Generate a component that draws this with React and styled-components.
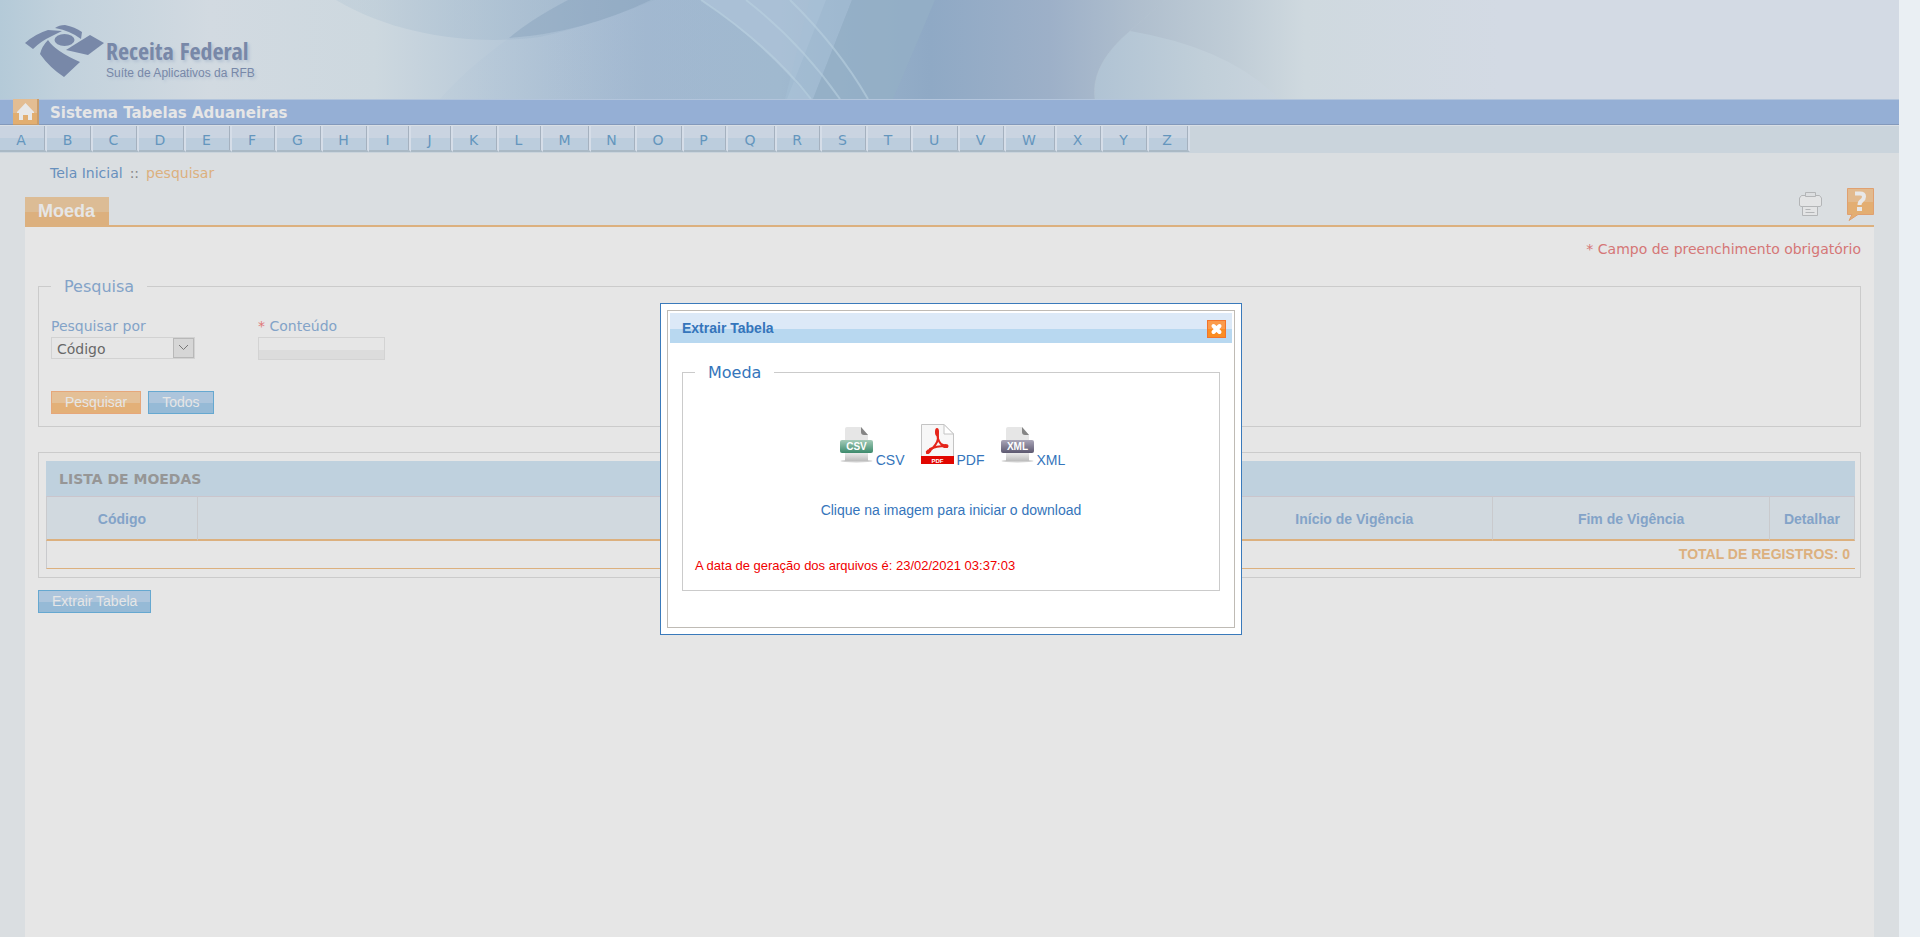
import React from "react";
import styled, { createGlobalStyle } from "styled-components";

const verdana = `Verdana, "DejaVu Sans", sans-serif`;
const arial = `"Liberation Sans", Arial, sans-serif`;

const GlobalStyle = createGlobalStyle`
  * { box-sizing: border-box; }
  html, body, #root { min-height: 100%; }
  body { margin: 0; background: #eaeff3; font: 14px/20px ${verdana}; }
`;

const Page = styled.div`
  margin-right: 21px;
  min-height: 100vh;
  display: flex;
  flex-direction: column;
  background: #dadee1;
`;

const Banner = styled.header`
  position: relative;
  height: 99px;
  overflow: hidden;
  background: #d3dae4;
`;

const BannerArt = styled.svg`
  position: absolute;
  inset: 0 auto auto 0;
  display: block;
`;

const Brand = styled.div`
  position: relative;
  display: flex;
  padding: 24px 0 0 25px;
  color: #7888a8;
`;

const BrandText = styled.div`
  padding: 14px 0 0 2px;
  text-shadow: 2px 2px 3px #b4c2d2;
`;

const BrandName = styled.div`
  font: bold 24px/26px "Liberation Sans Narrow", "Open Sans Condensed", ${arial};
  white-space: nowrap;
`;

const BrandSub = styled.div`
  padding-top: 2px;
  font: 12px/14px ${arial};
  white-space: nowrap;
`;

const TitleBar = styled.div`
  display: flex;
  align-items: center;
  gap: 11px;
  height: 26px;
  padding-left: 13px;
  background: #95afd5;
  border-top: 1px solid #b3c5dc;
  border-bottom: 1px solid #8399bb;
  color: #e6e6e6;
  font-size: 15px;
  font-weight: bold;
  line-height: 24px;
`;

const SystemName = styled.span`
  padding-top: 2px;
`;

const HomeLink = styled.a`
  display: flex;
  width: 26px;
  height: 26px;
`;

const Letters = styled.nav`
  display: flex;
  height: 28px;
  padding-bottom: 1px;
  background: #cad4dc;
  border-top: 1px solid #d9dfe5;
`;

const Letter = styled.a`
  width: ${(p) => p.$w}px;
  padding-right: 3px;
  border-right: 2px solid #d5dde8;
  border-bottom: 2px solid #aab9c5;
  box-shadow: inset -1px 0 0 #a5b1bf;
  background: linear-gradient(#cad4e1 0 50%, #bccddd 50%);
  color: #6496bd;
  font-size: 14px;
  line-height: 28px;
  text-align: center;
  text-decoration: none;
`;

const Crumbs = styled.nav`
  display: flex;
  gap: 7px;
  padding: 10px 50px 0;
  height: 43px;
  color: #888;
  a { color: #6890bd; text-decoration: none; }
  strong { color: #dcb07e; font-weight: normal; }
`;

const Heading = styled.div`
  display: flex;
  justify-content: space-between;
  align-items: flex-end;
  height: 31px;
  margin: 0 25px;
  border-bottom: 2px solid #dcb07e;
`;

const Tab = styled.h1`
  margin: 0;
  padding: 0 14px 0 13px;
  height: 28px;
  background: linear-gradient(#dcbc95 0 55%, #dcb07e 55%);
  color: #e6e6e6;
  font: bold 18px/29px ${arial};
`;

const Tools = styled.div`
  display: flex;
  align-items: flex-end;
  gap: 25px;
  a { display: flex; }
  a:first-child { padding-bottom: 9px; }
  a:last-child { padding-bottom: 4px; }
`;

const Panel = styled.main`
  flex: 1;
  margin: 0 25px;
  padding: 12px 13px 20px;
  background: #e6e6e6;
`;

const RequiredNote = styled.p`
  margin: 0 0 17px;
  text-align: right;
  color: #d57676;
`;

const Star = styled.span`
  color: #e07878;
`;

const Group = styled.fieldset`
  margin: 0;
  padding: 0 12px;
  border: 1px solid #cbcbcb;
  min-width: 0;
`;

const GroupTitle = styled.legend`
  padding: 0 13px;
  color: ${(p) => p.$color};
  font-size: 16px;
  line-height: 21px;
`;

const SearchForm = styled.form`
  padding: 20px 0 12px;
`;

const Fields = styled.div`
  display: flex;
  gap: 63px;
  margin-bottom: 31px;
`;

const Field = styled.div`
  display: flex;
  flex-direction: column;
  label { color: #83a3c8; line-height: 18px; padding-bottom: 2px; }
`;

const SelectWrap = styled.div`
  display: flex;
  position: relative;
  width: 144px;
  height: 22px;
  border: 1px solid #d2d2d2;
  select {
    flex: 1;
    appearance: none;
    border: 0;
    padding: 1px 5px 0;
    background: transparent;
    color: #686868;
    font: 14px/20px ${verdana};
  }
  svg { position: absolute; right: 0; top: 0; pointer-events: none; }
`;

const TextBox = styled.input`
  width: 127px;
  height: 23px;
  border: 1px solid #d3d3d3;
  background: linear-gradient(#e6e6e6 0 55%, #dcdcdc 55%);
`;

const Buttons = styled.div`
  display: flex;
  gap: 7px;
`;

const Button = styled.button`
  height: 23px;
  padding: 0 13px 1px;
  border: 1px solid ${(p) => (p.$primary ? "#e6a77a" : "#66a8d0")};
  background: ${(p) =>
    p.$primary
      ? "linear-gradient(#e4c097 0 50%, #e3b078 50%)"
      : "linear-gradient(#adc5dc 0 50%, #96bad6 50%)"};
  color: #e6e6e6;
  font: 14px/20px ${arial};
`;

const ListBox = styled.section`
  margin: 25px 0 12px;
  padding: 8px 5px 8px 7px;
  border: 1px solid #cbcbcb;
`;

const Table = styled.table`
  width: 100%;
  border-collapse: separate;
  border-spacing: 0;
  table-layout: fixed;
  caption {
    height: 35px;
    padding-left: 13px;
    background: #bfd1de;
    color: #969696;
    font-weight: bold;
    line-height: 36px;
    text-align: left;
  }
  th {
    height: 45px;
    padding: 2px 0 0;
    border-top: 1px solid #cac5cc;
    border-right: 1px solid #c9cacd;
    border-bottom: 2px solid #dcb07e;
    background: #d1d9df;
    color: #83a3c8;
    font: bold 14px/20px ${arial};
  }
  th:first-child, td { border-left: 1px solid #c9cacd; }
  td {
    height: 28px;
    padding: 0 5px 1px;
    border-bottom: 1px solid #dcb07e;
    color: #dcb07e;
    font: bold 14px/20px ${arial};
    text-align: right;
  }
`;

const Overlay = styled.div`
  position: fixed;
  inset: 0 21px 0 0;
  padding: 0 0 0 3px;
  display: flex;
  align-items: center;
  justify-content: center;
`;

const Dialog = styled.div`
  width: 582px;
  padding: 6px;
  border: 1px solid #3a7abb;
  background: #fff;
`;

const DialogFrame = styled.div`
  padding: 2px 2px 36px;
  border: 1px solid #bfbbb5;
`;

const DialogHeader = styled.div`
  display: flex;
  align-items: center;
  justify-content: space-between;
  height: 30px;
  padding: 0 6px 0 12px;
  background: linear-gradient(#dce9f7 0 52%, #b8d8f0 52%);
  h2 { margin: 0; color: #3575bb; font: bold 14px/20px ${arial}; }
  button { display: flex; padding: 2px 0 0; border: 0; background: none; }
`;

const DialogBody = styled.div`
  padding: 19px 12px 0;
  font: 14px/20px ${arial};
  color: #3575bb;
  legend { font-family: ${verdana}; }
`;

const Formats = styled.div`
  display: flex;
  justify-content: center;
  align-items: flex-end;
  gap: 16px;
  padding: 41px 0 0 3px;
  a {
    display: flex;
    align-items: flex-end;
    gap: 3px;
    color: #3575bb;
    line-height: 16px;
    text-decoration: none;
  }
  svg { margin-bottom: 4px; }
`;

const Hint = styled.p`
  margin: 32px 0 36px;
  text-align: center;
`;

const Generated = styled.p`
  margin: 0 0 14px;
  color: #f00000;
  font-size: 13px;
`;

const LETTERS = [
  ["A", 47], ["B", 46], ["C", 46], ["D", 47], ["E", 46], ["F", 45], ["G", 46],
  ["H", 46], ["I", 42], ["J", 42], ["K", 46], ["L", 44], ["M", 48], ["N", 46],
  ["O", 47], ["P", 44], ["Q", 49], ["R", 45], ["S", 46], ["T", 45], ["U", 47],
  ["V", 46], ["W", 51], ["X", 46], ["Y", 46], ["Z", 41],
];

function Waves() {
  return (
    <BannerArt width="1500" height="99" viewBox="0 0 1500 99" aria-hidden="true">
      <defs>
        <linearGradient id="sky">
          <stop offset="0" stopColor="#b4cad8" />
          <stop offset="0.04" stopColor="#c1d1dc" />
          <stop offset="0.14" stopColor="#d2dae1" />
          <stop offset="0.25" stopColor="#cdd8df" />
          <stop offset="0.33" stopColor="#b9cad9" />
          <stop offset="0.43" stopColor="#a2b8d0" />
          <stop offset="0.52" stopColor="#a0b9cf" />
          <stop offset="0.62" stopColor="#8fa9c5" />
          <stop offset="0.7" stopColor="#9db0c8" />
          <stop offset="0.76" stopColor="#b0bfce" />
          <stop offset="0.82" stopColor="#bfccd6" />
          <stop offset="0.87" stopColor="#cfd9df" />
          <stop offset="1" stopColor="#d3dae4" />
        </linearGradient>
        <linearGradient id="arc">
          <stop offset="0" stopColor="#a9bfd0" stopOpacity="0.25" />
          <stop offset="1" stopColor="#9bb3ca" stopOpacity="0.6" />
        </linearGradient>
        <linearGradient id="drift">
          <stop offset="0" stopColor="#a0b8d1" stopOpacity="0.08" />
          <stop offset="1" stopColor="#a0b8d1" stopOpacity="0.3" />
        </linearGradient>
        <linearGradient id="petal">
          <stop offset="0" stopColor="#b0c3d4" />
          <stop offset="0.6" stopColor="#c1cfd9" />
          <stop offset="1" stopColor="#c9d4dd" />
        </linearGradient>
      </defs>
      <rect width="1500" height="99" fill="url(#sky)" />
      <path d="M336 0C400 38 480 45 540 37C580 28 620 14 655 0Z" fill="url(#arc)" />
      <path d="M568 0Q530 20 509 38Q582 33 651 0Z" fill="#829eba" fillOpacity="0.4" />
      <path d="M509 38Q465 70 440 99H720V0H651Q582 33 509 38Z" fill="url(#drift)" />
      <path d="M701 0H826L787 99H810Q760 40 701 0Z" fill="#b5cadd" fillOpacity="0.45" />
      <path d="M810 0H852L813 99H785Z" fill="#a6bfd6" fillOpacity="0.5" />
      <path d="M852 0H935L893 99H813Z" fill="#93afc6" fillOpacity="0.8" />
      <path d="M1130 31Q1090 65 1095 99H1279Q1230 48 1130 31Z" fill="url(#petal)" />
      <path d="M1165 0L1130 31Q1090 65 1095 99" fill="none" stroke="#b6c5d3" strokeOpacity="0.4" />
      <g fill="none" stroke="#b9d0df" strokeWidth="2" strokeOpacity="0.6">
        <path d="M701 0Q770 46 811 99" />
        <path d="M746 0Q800 42 840 99" />
        <path d="M790 0Q838 47 868 99" />
      </g>
    </BannerArt>
  );
}

function Emblem() {
  return (
    <svg width="79" height="54" viewBox="25 24 79 54" fill="#7888a8" aria-hidden="true">
      <path d="M25 43Q35 34 48 30L62 31L52 36Q41 41 33 49Z" />
      <path d="M55 28Q59 25 65 25Q75 27 82 32L81 39Q71 31 55 28Z" />
      <ellipse cx="64.500" cy="40" rx="10" ry="6" />
      <path d="M66 50Q77 43 90 35L104 43L88 55Z" />
      <path d="M48 40Q55 51 80 62L64 77Q50 68 40 54Q42 46 48 40Z" />
    </svg>
  );
}

function HomeIcon() {
  return (
    <svg width="26" height="26" viewBox="0 0 26 26" aria-hidden="true">
      <rect width="26" height="26" fill="#c89d6d" />
      <rect width="24" height="25" fill="#e2ae70" />
      <rect width="24" height="14" fill="#e3bd93" />
      <path d="M12.500 4L21 13V14H19V21H15V16H10V21H6V14H4V13Z" fill="#e8e8e8" />
    </svg>
  );
}

function PrinterIcon() {
  return (
    <svg width="23" height="24" viewBox="0 0 23 24" fill="#e3e4e5" stroke="#b3b5b7" aria-hidden="true">
      <path d="M2.500 3.500H20.500L22.500 6V13.500L21 14.500H2L.5 13.500V6Z" />
      <path d="M6.500.5H16.500V4.500H6.500Z" fill="#dcdee0" />
      <path d="M3.500 14.500H18.500V23.500H3.500Z" />
      <path d="M6.500 17.500H11.500M6.500 20.500H15.500" />
    </svg>
  );
}

function HelpIcon() {
  return (
    <svg width="27" height="33" viewBox="0 0 27 33" aria-hidden="true">
      <path d="M.5.5H26.500V26.500H11L2 32.500L5 26.500H.5Z" fill="#e3ae72" stroke="#e0a070" />
      <path d="M1 1H26V14H1Z" fill="#e2ba8e" />
      <path d="M8 5.500H13Q17 5.500 17 8.500Q17 11 15 12.500Q12.500 14 12.500 17" fill="none" stroke="#e8e8e8" strokeWidth="4" />
      <rect x="10" y="19" width="5" height="4" fill="#e8e8e8" />
    </svg>
  );
}

function CloseIcon() {
  return (
    <svg width="19" height="18" viewBox="0 0 19 18" aria-hidden="true">
      <rect x=".5" y=".5" width="18" height="17" fill="#fa8d22" stroke="#f3742a" />
      <rect x="1" y="1" width="17" height="8" fill="#fb9b4c" />
      <path d="M6.500 6L12.500 12M12.500 6L6.500 12" stroke="#fff" strokeWidth="4" strokeLinecap="round" />
    </svg>
  );
}

function ArrowIcon() {
  return (
    <svg width="21" height="20" viewBox="0 0 21 20" aria-hidden="true">
      <rect x=".5" y=".5" width="20" height="19" fill="#d6d6d6" stroke="#b8b8b8" />
      <path d="M6 7L10.500 11.500L15 7" fill="none" stroke="#777" />
    </svg>
  );
}

function SheetIcon({ label, light, dark }) {
  const id = `band-${label}`;
  return (
    <svg width="33" height="37" viewBox="0 0 33 37" aria-hidden="true">
      <defs>
        <linearGradient id={id} x2="0" y2="1">
          <stop offset="0" stopColor={light} />
          <stop offset="1" stopColor={dark} />
        </linearGradient>
        <linearGradient id={`${id}-foot`} x2="0" y2="1">
          <stop offset="0" stopColor="#ebebeb" />
          <stop offset="1" stopColor="#bcbcbc" />
        </linearGradient>
      </defs>
      <ellipse cx="16.500" cy="34" rx="16" ry="1.500" fill="#d0d0d0" />
      <path d="M5 2Q5 0 7 0H21L28 8V30H5Z" fill="#e6e6e6" />
      <path d="M5 26H28V34H5Z" fill={`url(#${id}-foot)`} />
      <path d="M21 0L28 8H24Q21 8 21 5Z" fill="#858585" />
      <rect y="13" width="33" height="13" rx="2" fill={`url(#${id})`} />
      <text x="16.500" y="23" textAnchor="middle" fill="#fff" fontFamily="Liberation Sans, sans-serif" fontSize="10" fontWeight="bold">{label}</text>
    </svg>
  );
}

function PdfIcon() {
  return (
    <svg width="33" height="40" viewBox="0 0 33 40" aria-hidden="true">
      <path d="M.5.5H23L32.500 10V39.500H.5Z" fill="#f7f7f7" stroke="#c4c4c4" />
      <path d="M23 .5V10H32.500Z" fill="#fff" stroke="#c4c4c4" />
      <rect y="32" width="33" height="8" fill="#e10600" />
      <path d="M16 6Q18 14 16 18Q13 24 6 29" fill="none" stroke="#e5251a" strokeWidth="2" strokeLinecap="round" />
      <path d="M16 7Q16 16 20 20L26 23M9 25Q15 22 25 22" fill="none" stroke="#e5251a" strokeWidth="2" strokeLinecap="round" />
      <ellipse cx="16" cy="8" rx="2" ry="4" fill="#e5251a" />
      <ellipse cx="24.500" cy="22" rx="3" ry="2" fill="#e5251a" />
      <ellipse cx="7.500" cy="27.500" rx="3" ry="2" fill="#e5251a" transform="rotate(-35 7.500 27.500)" />
      <text x="16.500" y="38.500" textAnchor="middle" fill="#fff" fontFamily="Liberation Sans, sans-serif" fontSize="6" fontWeight="bold">PDF</text>
    </svg>
  );
}

export default function App() {
  return (
    <>
      <GlobalStyle />
      <Page>
        <Banner>
          <Waves />
          <Brand>
            <Emblem />
            <BrandText>
              <BrandName>Receita Federal</BrandName>
              <BrandSub>Suíte de Aplicativos da RFB</BrandSub>
            </BrandText>
          </Brand>
        </Banner>
        <TitleBar>
          <HomeLink href="#" aria-label="Início"><HomeIcon /></HomeLink>
          <SystemName>Sistema Tabelas Aduaneiras</SystemName>
        </TitleBar>
        <Letters>
          {LETTERS.map(([l, w]) => (
            <Letter key={l} href="#" $w={w}>{l}</Letter>
          ))}
        </Letters>
        <Crumbs>
          <a href="#">Tela Inicial</a>
          <span>::</span>
          <strong>pesquisar</strong>
        </Crumbs>
        <Heading>
          <Tab>Moeda</Tab>
          <Tools>
            <a href="#" aria-label="Imprimir"><PrinterIcon /></a>
            <a href="#" aria-label="Ajuda"><HelpIcon /></a>
          </Tools>
        </Heading>
        <Panel>
          <RequiredNote>* Campo de preenchimento obrigatório</RequiredNote>
          <Group>
            <GroupTitle $color="#83a3c8">Pesquisa</GroupTitle>
            <SearchForm>
              <Fields>
                <Field>
                  <label htmlFor="por">Pesquisar por</label>
                  <SelectWrap>
                    <select id="por"><option>Código</option></select>
                    <ArrowIcon />
                  </SelectWrap>
                </Field>
                <Field>
                  <label htmlFor="conteudo"><Star>*</Star> Conteúdo</label>
                  <TextBox id="conteudo" />
                </Field>
              </Fields>
              <Buttons>
                <Button type="button" $primary>Pesquisar</Button>
                <Button type="button">Todos</Button>
              </Buttons>
            </SearchForm>
          </Group>
          <ListBox>
            <Table>
              <caption>LISTA DE MOEDAS</caption>
              <colgroup>
                <col style={{ width: "8.4%" }} />
                <col />
                <col style={{ width: "15.3%" }} />
                <col style={{ width: "15.3%" }} />
                <col style={{ width: "4.7%" }} />
              </colgroup>
              <thead>
                <tr>
                  <th>Código</th>
                  <th />
                  <th>Início de Vigência</th>
                  <th>Fim de Vigência</th>
                  <th>Detalhar</th>
                </tr>
              </thead>
              <tbody>
                <tr><td colSpan={5}>TOTAL DE REGISTROS: 0</td></tr>
              </tbody>
            </Table>
          </ListBox>
          <Button type="button">Extrair Tabela</Button>
        </Panel>
      </Page>
      <Overlay>
        <Dialog role="dialog" aria-labelledby="dialog-title">
          <DialogFrame>
            <DialogHeader>
              <h2 id="dialog-title">Extrair Tabela</h2>
              <button type="button" aria-label="Fechar"><CloseIcon /></button>
            </DialogHeader>
            <DialogBody>
              <Group>
                <GroupTitle $color="#3575bb">Moeda</GroupTitle>
                <Formats>
                  <a href="#"><SheetIcon label="CSV" light="#a4cbb8" dark="#3c8a6c" />CSV</a>
                  <a href="#"><PdfIcon />PDF</a>
                  <a href="#"><SheetIcon label="XML" light="#aaa6b8" dark="#5c5870" />XML</a>
                </Formats>
                <Hint>Clique na imagem para iniciar o download</Hint>
                <Generated>A data de geração dos arquivos é: 23/02/2021 03:37:03</Generated>
              </Group>
            </DialogBody>
          </DialogFrame>
        </Dialog>
      </Overlay>
    </>
  );
}
